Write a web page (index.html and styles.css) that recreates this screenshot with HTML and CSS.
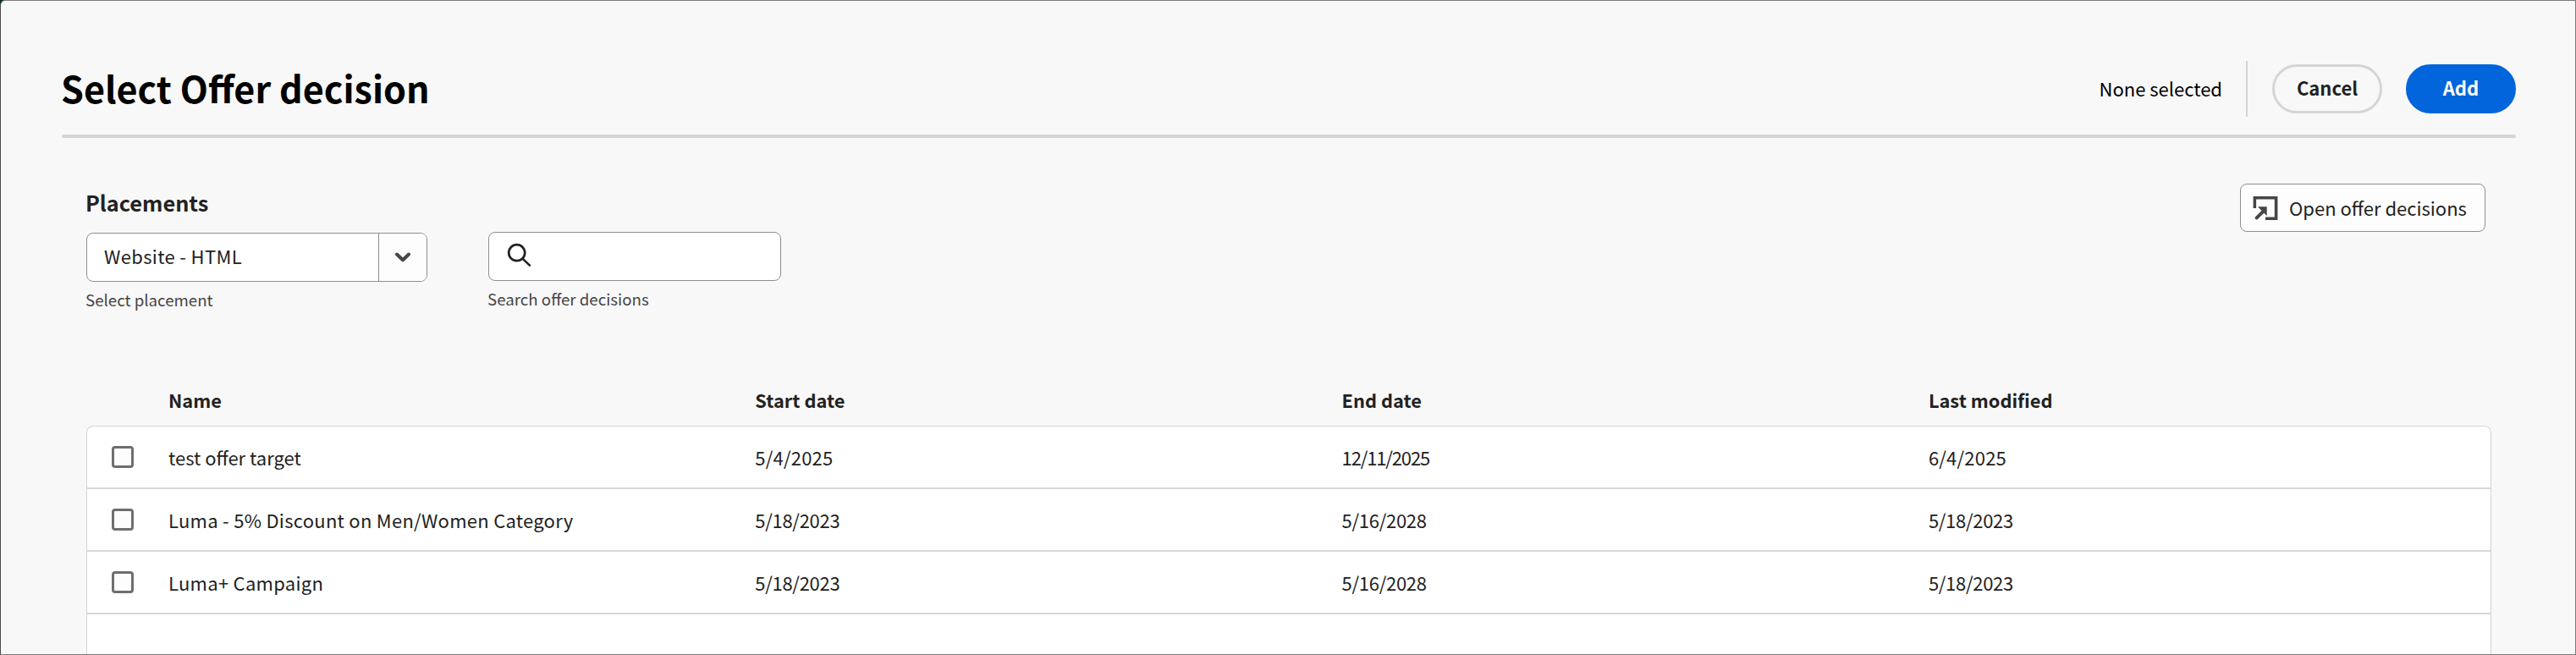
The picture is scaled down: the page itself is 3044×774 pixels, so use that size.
FILE: index.html
```html
<!DOCTYPE html>
<html lang="en">
<head>
<meta charset="utf-8">
<title>Select Offer decision</title>
<link rel="stylesheet" href="styles.css">
</head>
<body>
<main class="dialog">
  <header class="header">
    <h1 class="title">Select Offer decision</h1>
    <div class="actions">
      <span class="status">None selected</span>
      <span class="separator"></span>
      <button class="pill pill-outline">Cancel</button>
      <button class="pill pill-primary">Add</button>
    </div>
  </header>
  <section class="filters">
    <div class="field placement">
      <h2 class="label">Placements</h2>
      <div class="select">
        <span class="select-value">Website - HTML</span>
        <span class="select-toggle">
          <svg width="20" height="12" viewBox="0 0 20 12"><path d="M3 2.5 10 9.2 17 2.5" fill="none" stroke="#464646" stroke-width="4" stroke-linecap="round" stroke-linejoin="round"/></svg>
        </span>
      </div>
      <p class="help">Select placement</p>
    </div>
    <div class="field search">
      <div class="search-box">
        <svg width="30" height="30" viewBox="0 0 30 30" fill="none" stroke="#222" stroke-width="2.7" stroke-linecap="round"><circle cx="11.7" cy="11.7" r="9.5"/><path d="m18.6 18.6 8.3 8"/></svg>
      </div>
      <p class="help">Search offer decisions</p>
    </div>
    <button class="open-button">
      <svg width="30" height="30" viewBox="0 0 30 30"><path d="M.6.9h28.8v28.2H15v-3.5h10.8V4.4H4.1v10.7H.6z" fill="#464646"/><path d="M6 13.2h10.7v10.9l-3.4-3.4-7.5 7.2c-1.8 1.6-4.3-.8-2.7-2.6l7.4-7.4z" fill="#464646"/></svg>
      <span class="open-label">Open offer decisions</span>
    </button>
  </section>
  <section class="table">
    <div class="row head"><span></span><span>Name</span><span>Start date</span><span>End date</span><span>Last modified</span></div>
    <div class="body">
      <div class="row"><i class="checkbox"></i><span>test offer target</span><span class="date short">5/4/2025</span><span class="date ones">12/11/2025</span><span class="date short">6/4/2025</span></div>
      <div class="row"><i class="checkbox"></i><span class="wide">Luma - 5% Discount on Men/Women Category</span><span class="date">5/18/2023</span><span class="date">5/16/2028</span><span class="date">5/18/2023</span></div>
      <div class="row"><i class="checkbox"></i><span class="wide">Luma+ Campaign</span><span class="date">5/18/2023</span><span class="date">5/16/2028</span><span class="date">5/18/2023</span></div>
    </div>
  </section>
</main>
</body>
</html>
```
FILE: styles.css
```css
* { box-sizing: border-box; }
body {
  margin: 0;
  height: 774px;
  overflow: hidden;
  background: #10292c;
  color: #222;
  font: 22px/30px "Noto Sans CJK SC", "Noto Sans", sans-serif;
}
h1, h2, p { margin: 0; }
button { font: inherit; color: inherit; padding: 0; }
svg { display: block; flex: none; }

.dialog {
  display: flex;
  flex-direction: column;
  height: 774px;
  overflow: hidden;
  border: 1px solid #7b7b7b;
  border-left-color: #4a4a4a;
  border-radius: 6px 0 0 0;
  background: #f8f8f8;
}

.header {
  position: relative;
  display: flex;
  justify-content: space-between;
  flex: none;
  height: 91px;
  margin: 71px 70px 0 72px;
}
.header::after {
  content: "";
  position: absolute;
  inset: auto 0 0 0;
  height: 4px;
  border-radius: 2px;
  background: #d5d5d5;
}
.title { margin-left: -1px; color: #000; font-size: 43.1px; font-weight: 700; line-height: 63px; }
.actions { display: flex; align-items: center; height: 66px; color: #000; }
.status { line-height: 64px; align-self: flex-start; }
.separator { width: 2px; height: 66px; margin: 0 29px 0 28px; background: #d5d5d5; }
.pill {
  width: 130px;
  height: 58px;
  border: 3px solid transparent;
  border-radius: 29px;
  padding-bottom: 4px;
  font-weight: 700;
}
.pill-outline { margin-right: 28px; border-color: #d5d5d5; background: none; color: #222; }
.pill-primary { border-color: #0265dc; background: #0265dc; color: #fff; }

.filters {
  display: flex;
  align-items: flex-start;
  flex: none;
  height: 287px;
  padding: 54px 106px 0 101px;
}
.label { font-size: 25.3px; font-weight: 700; line-height: 36px; margin: 4px 0 18px -1px; }
.placement { width: 403px; }
.select, .search-box {
  display: flex;
  height: 58px;
  border: 1px solid #8f8f8f;
  border-radius: 8px;
  background: #fff;
}
.select-value { flex: 1; padding-left: 20px; line-height: 53px; letter-spacing: .35px; }
.select-toggle {
  display: flex;
  align-items: center;
  justify-content: center;
  width: 57px;
  border-left: 1px solid #8f8f8f;
  border-radius: 0 7px 7px 0;
  background: #fdfdfd;
}
.help { color: #464646; font-size: 18.7px; line-height: 28px; margin: 7px 0 0 -1px; }
.search { width: 346px; margin: 57px 0 0 72px; }
.search-box { padding: 12px 0 0 21px; }
.open-button {
  display: flex;
  align-items: center;
  width: 290px;
  height: 57px;
  margin-left: auto;
  padding-left: 14px;
  gap: 13px;
  border: 1px solid #8f8f8f;
  border-radius: 8px;
  background: #fdfdfd;
}
.open-label { padding-bottom: 2px; }

.table { display: flex; flex-direction: column; flex: 1; margin: 0 99px 0 101px; }
.row {
  display: grid;
  grid-template-columns: 96px repeat(4, 693.3px);
  align-items: center;
  height: 74px;
  border-bottom: 2px solid #d8d8d8;
}
.row.head { height: 53px; padding: 0 0 8px 1px; border: 0; font-size: 21.8px; font-weight: 700; }
.body {
  flex: 1;
  border: 1px solid #d5d5d5;
  border-bottom: 0;
  border-radius: 8px 8px 0 0;
  background: #fff;
}
.checkbox {
  width: 26px;
  height: 26px;
  margin-left: 29px;
  border: 3px solid #6e6e6e;
  border-radius: 4px;
  background: #fdfdfd;
}
.wide { letter-spacing: .27px; }
.date { letter-spacing: -.3px; }
.date.short { letter-spacing: .2px; }
.date.ones { letter-spacing: -1.15px; }
```
